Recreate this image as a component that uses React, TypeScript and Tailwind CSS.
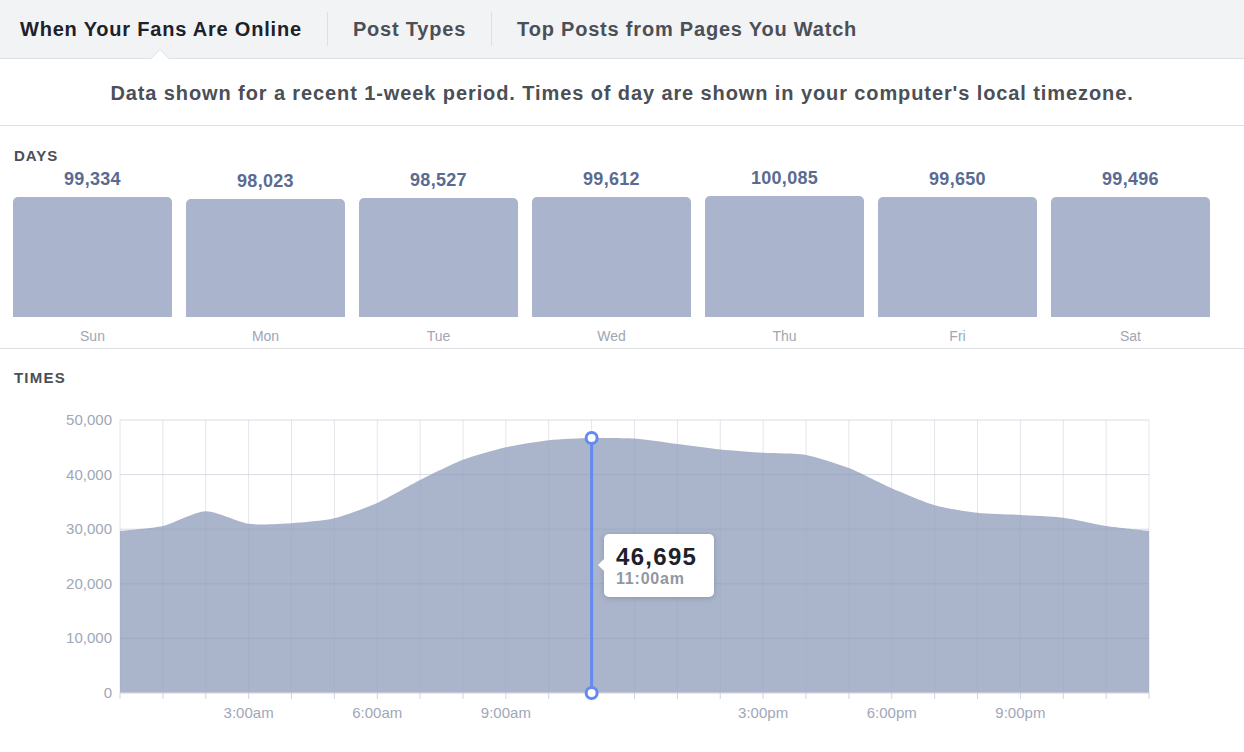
import React from "react";

type Day = { label: string; value: number };

const days: Day[] = [
  { label: "Sun", value: 99334 },
  { label: "Mon", value: 98023 },
  { label: "Tue", value: 98527 },
  { label: "Wed", value: 99612 },
  { label: "Thu", value: 100085 },
  { label: "Fri", value: 99650 },
  { label: "Sat", value: 99496 },
];

// fans online per hour, 0..24
const hours = [
  29700, 30600, 33300, 31000, 31100, 32000, 34800, 39000, 42700, 45000, 46300,
  46695, 46600, 45600, 44600, 44000, 43600, 41200, 37500, 34400, 33000, 32600,
  32100, 30600, 29700,
];

const X0 = 120;
const X1 = 1149;
const Y0 = 34; // 50,000
const Y1 = 307; // 0
const step = (X1 - X0) / 24;
const xOf = (i: number) => X0 + i * step;
const yOf = (v: number) => Y1 - (v / 50000) * (Y1 - Y0);

function areaPath() {
  const pts = hours.map((v, i) => [xOf(i), yOf(v)]);
  let d = `M${pts[0][0]},${Y1} L${pts[0][0]},${pts[0][1]}`;
  for (let i = 0; i < pts.length - 1; i++) {
    const p0 = pts[Math.max(0, i - 1)];
    const p1 = pts[i];
    const p2 = pts[i + 1];
    const p3 = pts[Math.min(pts.length - 1, i + 2)];
    const t = 0.12;
    const c1x = p1[0] + (p2[0] - p0[0]) * t;
    const c1y = p1[1] + (p2[1] - p0[1]) * t;
    const c2x = p2[0] - (p3[0] - p1[0]) * t;
    const c2y = p2[1] - (p3[1] - p1[1]) * t;
    d += ` C${c1x},${c1y} ${c2x},${c2y} ${p2[0]},${p2[1]}`;
  }
  d += ` L${pts[pts.length - 1][0]},${Y1} Z`;
  return d;
}

const font = { fontFamily: '"Liberation Sans", Arial, sans-serif' };

function Tabs() {
  return (
    <div className="relative flex h-[59px] items-center border-b border-[#dddfe2] bg-[#f2f3f5] pl-[20px] text-[20px] tracking-[0.8px]">
      <div className="relative flex h-full items-center pr-[25px]">
        <span className="font-bold text-[#1d2129]">When Your Fans Are Online</span>
        <span className="absolute bottom-[-1px] left-[130px] h-0 w-0 border-x-[10px] border-b-[10px] border-x-transparent border-b-[#dddfe2]" />
        <span className="absolute bottom-[-1px] left-[131px] h-0 w-0 border-x-[9px] border-b-[9px] border-x-transparent border-b-white" />
      </div>
      <div className="h-[34px] w-px bg-[#dddfe2]" />
      <div className="px-[25px] font-bold text-[#4b4f56]">Post Types</div>
      <div className="h-[34px] w-px bg-[#dddfe2]" />
      <div className="px-[25px] font-bold text-[#4b4f56]">Top Posts from Pages You Watch</div>
    </div>
  );
}

function Days() {
  const max = 100085;
  return (
    <div className="border-b border-[#dddfe2] pt-[21px] pb-[4px]">
      <div className="pl-[14px] text-[15px] leading-[17px] font-bold tracking-[1px] text-[#4b4f56]">DAYS</div>
      <div className="flex h-[153px] items-end gap-[14px] px-[13px]">
        {days.map((d) => (
          <div key={d.label} className="flex w-[159px] flex-col items-center">
            <div className="mb-[8px] text-[18px] leading-[20px] font-bold tracking-[0.3px] text-[#5a6b91]">
              {d.value.toLocaleString("en-US")}
            </div>
            <div
              className="w-full rounded-t-[5px] bg-[#aab5cd]"
              style={{ height: (d.value / max) * 121 }}
            />
          </div>
        ))}
      </div>
      <div className="mt-[11px] flex gap-[14px] px-[13px]">
        {days.map((d) => (
          <div key={d.label} className="w-[159px] text-center text-[14px] leading-[16px] text-[#a0a6b4]">
            {d.label}
          </div>
        ))}
      </div>
    </div>
  );
}

function TimesChart() {
  const yTicks = [0, 10000, 20000, 30000, 40000, 50000];
  const xLabels: [number, string][] = [
    [3, "3:00am"],
    [6, "6:00am"],
    [9, "9:00am"],
    [15, "3:00pm"],
    [18, "6:00pm"],
    [21, "9:00pm"],
  ];
  const mx = xOf(11);
  const my = yOf(46695);
  return (
    <div className="relative h-[366px]">
      <svg width="1244" height="366" className="absolute left-0 top-0">
        {yTicks.map((v) => (
          <line key={v} x1={X0} x2={X1} y1={yOf(v)} y2={yOf(v)} stroke="#eceef1" />
        ))}
        {hours.map((_, i) => (
          <line key={i} x1={xOf(i)} x2={xOf(i)} y1={Y0} y2={Y1} stroke="#eceef1" />
        ))}
        <path d={areaPath()} fill="#aab5cc" />
        {yTicks.map((v) => (
          <line key={v} x1={X0} x2={X1} y1={yOf(v)} y2={yOf(v)} stroke="#5b6b90" strokeOpacity="0.13" />
        ))}
        {hours.map((_, i) => (
          <line key={i} x1={xOf(i)} x2={xOf(i)} y1={Y0} y2={Y1} stroke="#5b6b90" strokeOpacity="0.06" />
        ))}
        <line x1={X0} x2={X1} y1={Y1} y2={Y1} stroke="#dfe2e8" />
        {hours.map((_, i) => (
          <line key={i} x1={xOf(i)} x2={xOf(i)} y1={Y1} y2={Y1 + 6} stroke="#cfd3db" />
        ))}
        {yTicks.map((v) => (
          <text
            key={v}
            x={112}
            y={yOf(v) + 5}
            textAnchor="end"
            fontSize="15"
            fill="#a0a7b9"
            style={font}
          >
            {v.toLocaleString("en-US")}
          </text>
        ))}
        {xLabels.map(([i, t]) => (
          <text key={t} x={xOf(i)} y={332} textAnchor="middle" fontSize="15" fill="#a0a7b9" style={font}>
            {t}
          </text>
        ))}
        <line x1={mx} x2={mx} y1={my} y2={Y1} stroke="#6389f2" strokeWidth="3" />
        <circle cx={mx} cy={my} r="5.5" fill="white" stroke="#6389f2" strokeWidth="3" />
        <circle cx={mx} cy={Y1} r="5.5" fill="white" stroke="#6389f2" strokeWidth="3" />
      </svg>
      <div className="absolute left-[604px] top-[148px] flex h-[63px] w-[110px] flex-col justify-center rounded-[5px] bg-white pl-[12px] shadow-[0_1px_6px_rgba(0,0,0,0.18)]">
        <span className="absolute left-[-6px] top-[25px] h-0 w-0 border-y-[6px] border-r-[6px] border-y-transparent border-r-white" />
        <div className="text-[24px] leading-[26px] font-bold tracking-[1.3px] text-[#1d2129]">46,695</div>
        <div className="text-[16px] leading-[18px] font-bold tracking-[0.8px] text-[#9197a3]">11:00am</div>
      </div>
    </div>
  );
}

export default function App() {
  return (
    <div className="h-[752px] w-[1244px] overflow-hidden bg-white" style={font}>
      <Tabs />
      <div className="flex h-[67px] items-center justify-center border-b border-[#dddfe2] pt-[2px]">
        <p className="text-[20px] font-bold tracking-[0.9px] text-[#4b4f56]">
          Data shown for a recent 1-week period. Times of day are shown in your computer's local timezone.
        </p>
      </div>
      <Days />
      <div className="pt-[20px]">
        <div className="pl-[14px] text-[15px] leading-[17px] font-bold tracking-[1.2px] text-[#4b4f56]">TIMES</div>
      </div>
      <TimesChart />
    </div>
  );
}
